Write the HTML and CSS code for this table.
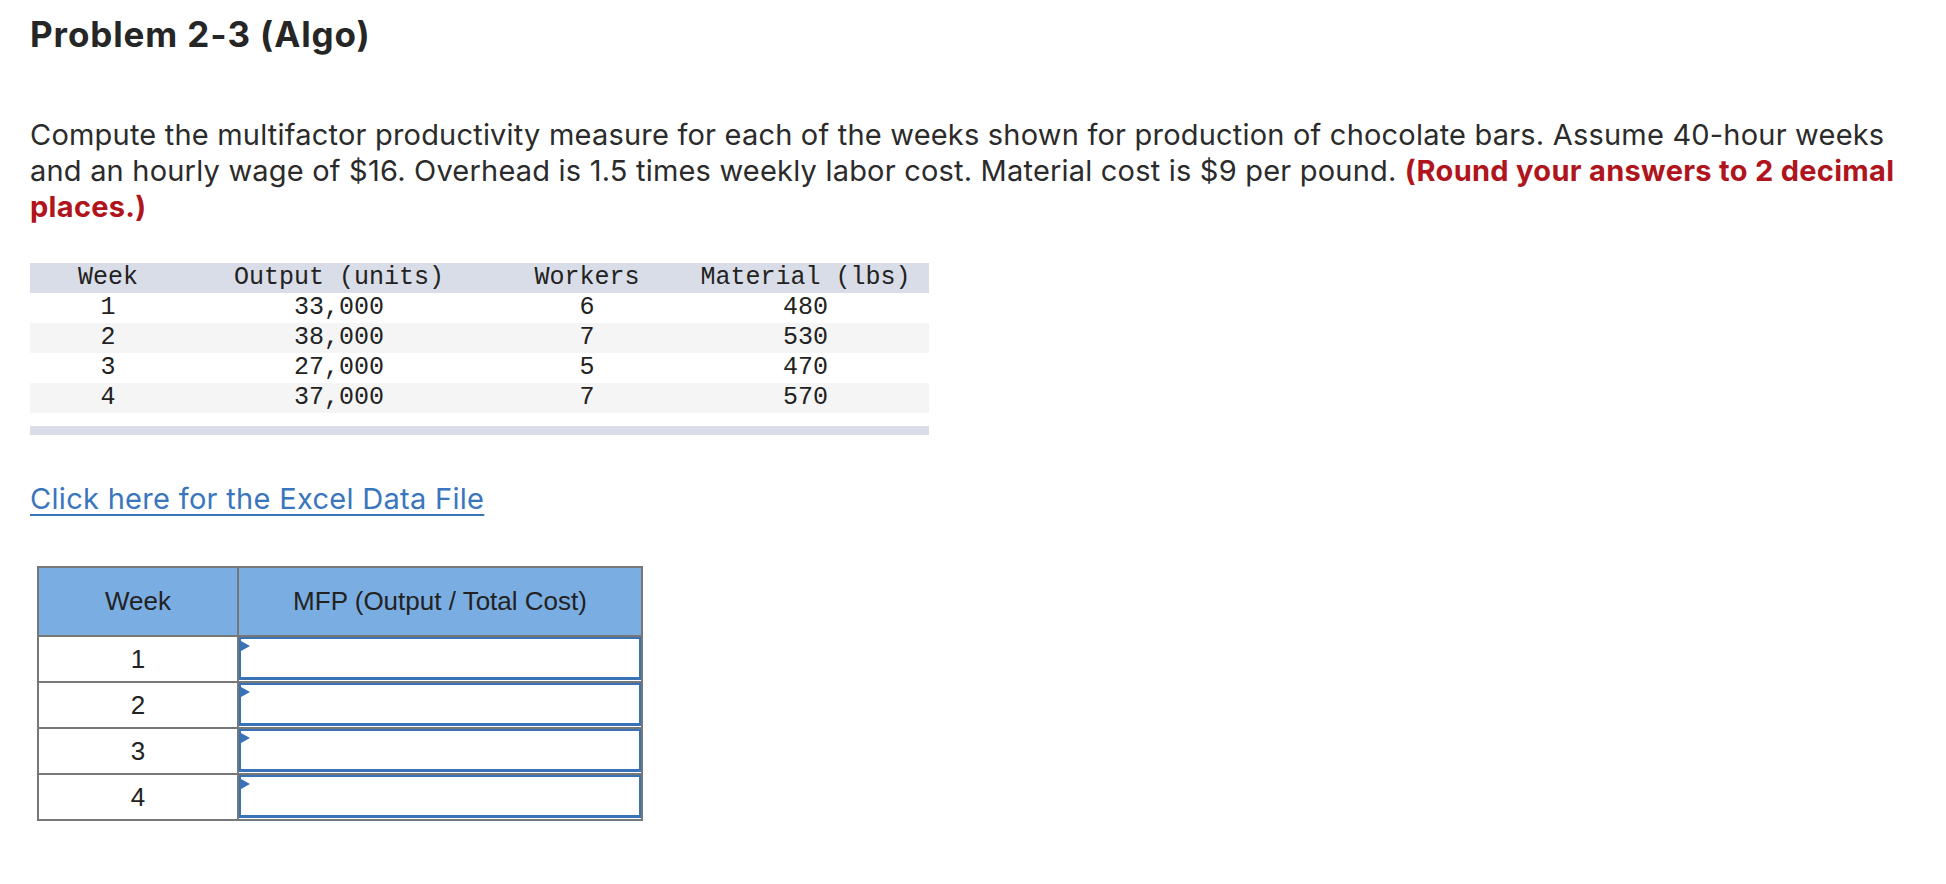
FILE: index.html
```html
<!DOCTYPE html>
<html>
<head>
<meta charset="utf-8">
<link rel="stylesheet" href="styles.css">
</head>
<body>
<div class="page">
  <h1 class="title">Problem 2-3 (Algo)</h1>
  <p class="prompt">Compute the multifactor productivity measure for each of the weeks shown for production of chocolate bars. Assume 40-hour weeks<br>and an hourly wage of $16. Overhead is 1.5 times weekly labor cost. Material cost is $9 per pound. <strong class="note">(Round your answers to 2 decimal<br>places.)</strong></p>

  <div class="data">
    <div class="data-row head">
      <span>Week</span><span>Output (units)</span><span>Workers</span><span>Material (lbs)</span>
    </div>
    <div class="data-row">
      <span>1</span><span>33,000</span><span>6</span><span>480</span>
    </div>
    <div class="data-row alt">
      <span>2</span><span>38,000</span><span>7</span><span>530</span>
    </div>
    <div class="data-row">
      <span>3</span><span>27,000</span><span>5</span><span>470</span>
    </div>
    <div class="data-row alt">
      <span>4</span><span>37,000</span><span>7</span><span>570</span>
    </div>
    <div class="data-foot"></div>
  </div>

  <a class="excel" href="#">Click here for the Excel Data File</a>

  <table class="answers">
    <thead>
      <tr><th class="c-week">Week</th><th class="c-mfp">MFP (Output / Total Cost)</th></tr>
    </thead>
    <tbody>
      <tr><td class="c-week">1</td><td class="c-input"><div class="field"><input type="text"></div></td></tr>
      <tr><td class="c-week">2</td><td class="c-input"><div class="field"><input type="text"></div></td></tr>
      <tr><td class="c-week">3</td><td class="c-input"><div class="field"><input type="text"></div></td></tr>
      <tr><td class="c-week">4</td><td class="c-input"><div class="field"><input type="text"></div></td></tr>
    </tbody>
  </table>
</div>
</body>
</html>
```

FILE: styles.css
```css
html, body {
  margin: 0;
  padding: 0;
  background: #ffffff;
}

.page {
  padding: 0 0 0 30px;
  font-family: "Inter", "Lato", "Liberation Sans", sans-serif;
  color: #2b2b2b;
}

.title {
  margin: 0;
  padding-top: 12px;
  font-size: 35px;
  line-height: 44px;
  font-weight: 700;
  letter-spacing: 0.9px;
  color: #262626;
}

.prompt {
  margin: 61px 0 0 0;
  font-size: 29px;
  line-height: 36px;
  letter-spacing: 0.2px;
  white-space: nowrap;
  color: #2b2b2b;
}

.note {
  color: #b0141c;
  font-weight: 700;
  letter-spacing: 0.3px;
}

.data {
  margin-top: 38px;
  width: 899px;
  font-family: "Liberation Mono", "DejaVu Sans Mono", monospace;
  font-size: 25px;
  color: #222222;
}

.data-row {
  display: grid;
  grid-template-columns: 156px 306px 190px 247px;
  height: 30px;
  line-height: 30px;
  text-align: center;
}

.data-row.head {
  background: #d9dde7;
}

.data-row.alt {
  background: #f5f5f5;
}

.data-foot {
  margin-top: 13px;
  height: 9px;
  background: #d9dde7;
}

.excel {
  display: inline-block;
  margin-top: 46px;
  font-size: 29px;
  line-height: 36px;
  letter-spacing: 0.3px;
  color: #3a76bd;
  text-decoration: underline;
  text-decoration-thickness: 2px;
  text-underline-offset: 5px;
}

.answers {
  margin: 49px 0 0 7px;
  border-collapse: collapse;
  font-family: "Liberation Sans", Arial, sans-serif;
  font-size: 26px;
  color: #222222;
}

.answers th,
.answers td {
  border: 2px solid #777777;
  padding: 0;
  text-align: center;
}

.answers th {
  height: 67px;
  background: #7aade1;
  font-weight: 400;
}

.answers .c-week {
  width: 198px;
}

.answers .c-mfp {
  width: 402px;
}

.answers td {
  height: 44px;
}

.c-input {
  vertical-align: top;
}

.field {
  position: relative;
  height: 44px;
}

.field::before {
  content: "";
  position: absolute;
  left: 2px;
  top: 4px;
  border-top: 5px solid transparent;
  border-bottom: 5px solid transparent;
  border-left: 9px solid #3a72b8;
}

.field input {
  display: block;
  width: 100%;
  height: 43px;
  margin: 0;
  padding: 0;
  box-sizing: border-box;
  border: 2px solid #3a72b8;
  border-bottom-width: 3px;
  background: #ffffff;
  outline: none;
}
```
